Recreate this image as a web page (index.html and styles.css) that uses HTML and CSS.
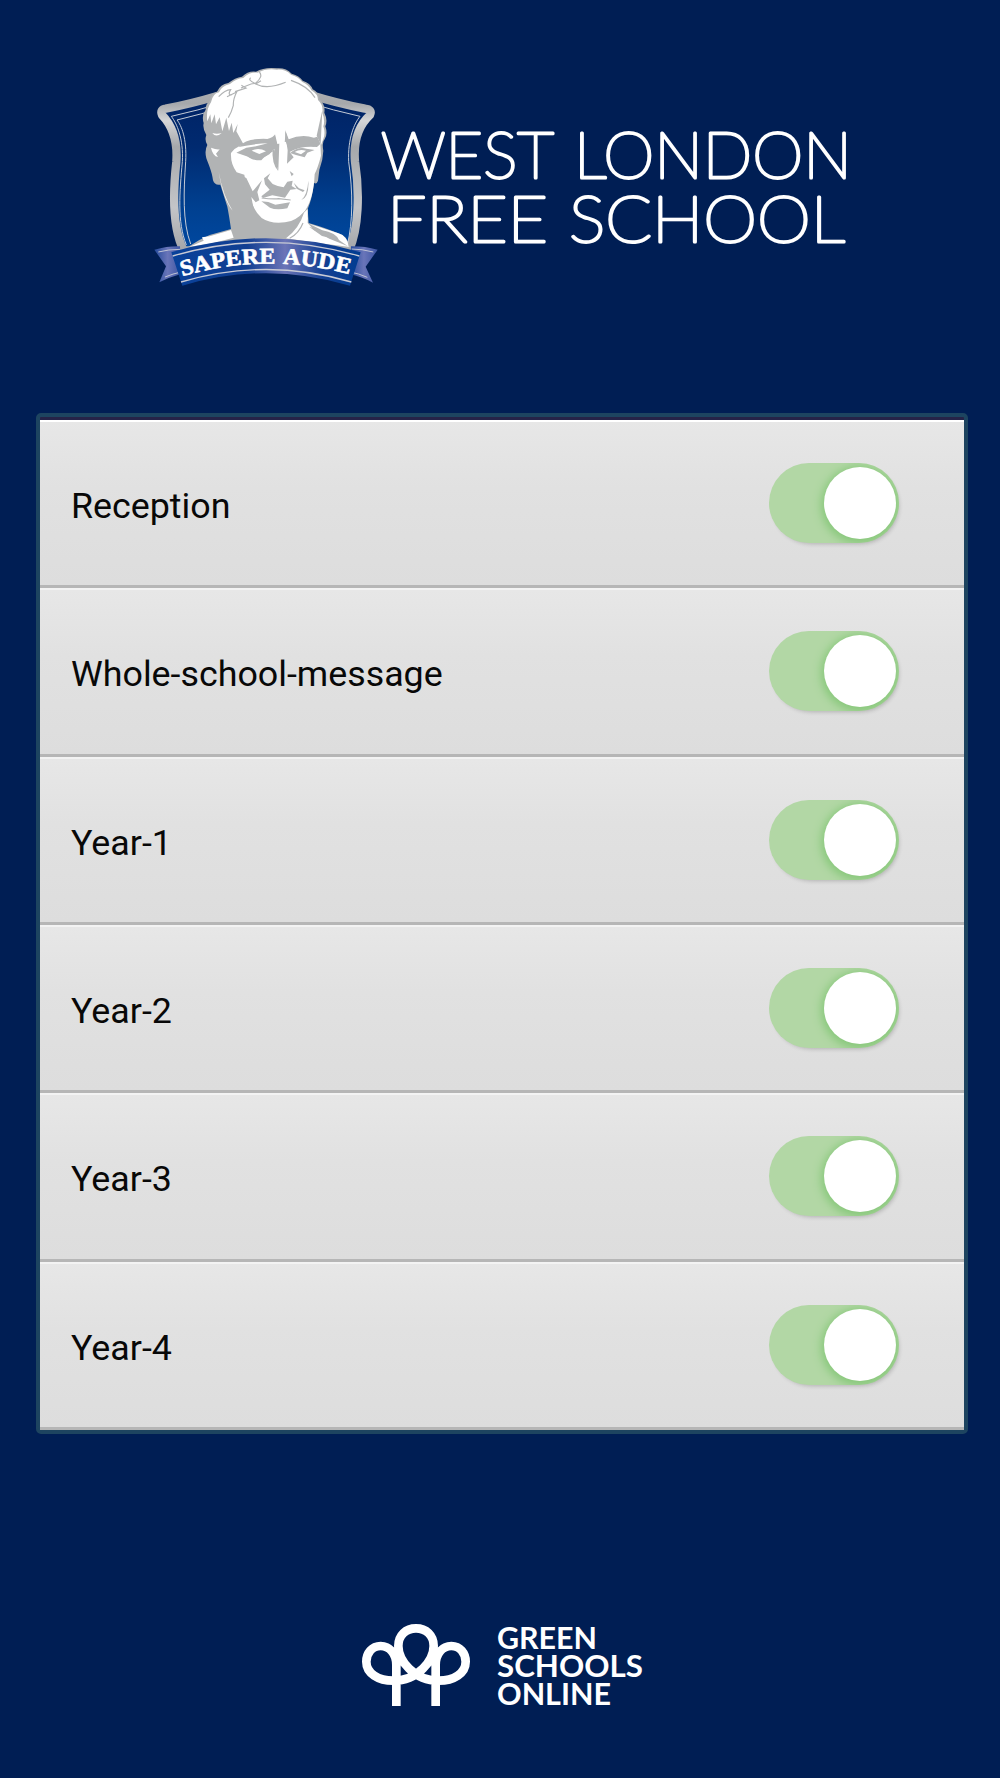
FILE: index.html
```html
<!DOCTYPE html>
<html lang="en">
  <head>
    <meta charset="UTF-8" />
    <meta name="viewport" content="width=device-width, initial-scale=1.0" />
    <title>West London Free School</title>
    <link rel="stylesheet" href="styles.css">
  </head>
  <body>
    <header class="header">
      <svg class="crest" viewBox="0 0 720 720">
        <defs>
          <linearGradient id="shield" x1="0" y1="0" x2="0" y2="1">
            <stop offset="0" stop-color="#002060" />
            <stop offset="0.4" stop-color="#002a70" />
            <stop offset="0.75" stop-color="#004090" />
            <stop offset="1" stop-color="#0048a0" />
          </linearGradient>
          <linearGradient id="silver" x1="0" y1="0" x2="0" y2="1">
            <stop offset="0" stop-color="#b1b3b6" />
            <stop offset="0.15" stop-color="#a6a8ab" />
            <stop offset="0.25" stop-color="#d5d6d8" />
            <stop offset="0.4" stop-color="#a6a8ab" />
            <stop offset="0.75" stop-color="#c4c5c8" />
            <stop offset="1" stop-color="#a4a6a9" />
          </linearGradient>
          <linearGradient id="ribbon">
            <stop offset="0" stop-color="#08419a" />
            <stop offset="0.4" stop-color="#123f92" />
            <stop offset="0.6" stop-color="#6b74b7" />
            <stop offset="0.8" stop-color="#123f92" />
            <stop offset="1" stop-color="#003c91" />
          </linearGradient>
          <linearGradient id="tail">
            <stop offset="0" stop-color="#254a9b" />
            <stop offset="0.5" stop-color="#6975b9" />
            <stop offset="1" stop-color="#3c55a3" />
          </linearGradient>
          <path id="motto" d="M112 664 Q364 590 622 660" />
        </defs>

        <!-- shield -->
        <path d="M116 586 C82 520 84 410 94 320 C99 250 75 205 51 180 Q44 163 62 161 Q245 124 361 68 Q480 124 660 161 Q683 163 675 180 C648 205 624 250 630 320 C644 410 642 520 612 586 Z" fill="url(#shield)" stroke="url(#silver)" stroke-width="25" stroke-linejoin="round" />
        <path d="M124 570 C96 500 104 410 112 320 C116 250 95 205 79 184 Q245 147 361 96 Q480 147 645 184 C628 205 608 250 611 320 C624 410 624 500 607 570" fill="none" stroke="#c3cad6" stroke-width="3" />
        <path d="M137 567 C112 500 116 410 122 320 C126 250 109 211 96 195 Q245 160 361 110" fill="none" stroke="#c3cad6" stroke-width="3" />

        <!-- bust in shade -->
        <path d="M128 577 Q160 554 194 540 L258 522 Q252 480 247 455 L226 389 Q209 392 204 376 C201 350 189 324 184 310 Q178 286 187 270 Q178 255 184 240 Q172 221 176 204 Q169 181 182 164 Q182 145 195 139 Q197 115 216 110 Q226 88 250 84 Q270 68 291 65 Q309 47 333 50 Q360 35 396 40 Q423 38 440 56 Q463 62 473 77 Q496 84 503 103 Q522 113 522 132 Q542 148 538 173 Q549 195 541 214 Q549 237 539 253 Q530 260 535 287 Q534 316 523 345 L519 377 Q515 389 507 384 Q502 430 488 462 L491 504 Q545 520 580 535 Q608 542 616 580 Z" fill="#b1b3b4" />
        <!-- hair and forehead -->
        <path d="M198 142 Q203 116 222 112 Q230 92 255 87 Q274 70 295 69 Q313 51 338 53 Q365 39 396 44 Q420 42 438 59 Q460 65 471 80 Q492 89 499 106 Q519 117 519 135 Q536 151 532 174 Q541 195 535 214 Q542 235 535 252 L528 270 L517 245 L507 248 Q470 236 431 253 L422 229 L419 263 L397 267 L390 238 L382 254 Q337 244 295 267 L274 229 L278 207 L265 234 L260 203 L252 228 L244 188 L232 229 L224 187 L213 208 L209 178 L199 205 L196 178 L187 199 Q182 165 198 142 Z" fill="#fff" />
        <!-- face -->
        <path d="M258 294 Q282 264 325 262 L385 258 Q347 274 304 278 L274 293 L305 304 Q336 322 373 298 L388 281 L386 309 L400 346 L403 263 L424 260 L428 286 L426 326 L446 307 L434 291 Q466 272 516 276 L526 267 L528 302 Q519 337 509 357 Q506 430 480 467 Q451 500 420 502 Q378 508 350 489 Q326 468 317 432 Q303 420 303 388 L298 359 L275 352 Q256 326 258 294 Z" fill="#fff" />
        <!-- shoulders and neck -->
        <path d="M134 575 L176 557 L171 547 L194 544 L258 525 L266 548 L205 564 Z M423 550 Q463 519 477 473 L488 462 L488 504 L507 525 L553 551 L615 576 L515 563 Z M492 506 L580 535 Q607 543 611 575 L582 555 Q572 533 532 526 Z" fill="#fff" />
        <path d="M198 278 Q215 285 224 283 L213 296 L219 306 Q203 303 198 278 M221 350 Q234 422 263 467 Q235 435 221 350 M202 234 Q216 239 230 234 Q213 249 202 234 M453 545 Q489 515 488 486" fill="#fff" />

        <g fill="#b1b3b4">
          <!-- brows, eyes -->
          <path d="M281 276 Q303 250 347 253 Q375 255 389 240 L395 266 Q346 262 281 276 M420 225 L430 255 Q475 248 516 266 L507 275 Q459 264 430 280 L422 259 Z" />
          <path d="M303 288 Q330 272 364 283 L386 288 Q362 300 349 316 Q317 317 304 299 Z M435 294 Q461 273 484 281 L509 285 L487 293 L479 307 Q456 302 435 294 Z" />
          <!-- nose -->
          <path d="M383 278 L390 292 Q392 321 400 349 Q379 325 383 278 M434 348 L446 357 L440 364 Z M376 355 L368 370 L383 387 Q399 395 416 397 L427 380 L443 377 L440 393 L455 402 L436 404 L420 428 L382 421 L354 429 L349 424 L374 404 L360 388 L357 370 Z" />
          <!-- cheeks -->
          <path d="M286 361 L304 369 L323 409 L351 376 L337 411 L343 436 L332 442 L319 426 Q322 450 331 471 Q292 415 286 361 M446 383 L462 400 L479 406 L474 411 L455 401 Z M490 377 Q493 427 469 435 Q487 420 490 377" />
          <!-- mouth -->
          <path d="M349 439 Q370 439 391 449 L435 442 L427 460 Q393 466 375 458 Z" />
          <path d="M492 515 L554 534 L566 551 L531 543 Z M532 165 L527 267 L515 242 Z" />
        </g>
        <path d="M320 287 Q341 276 363 289 L343 297 Z M449 291 Q464 281 483 287 L468 298 Z" fill="#fff" />
        <g fill="none" stroke="#b1b3b4" stroke-width="3.5">
          <path d="M221 125 Q240 105 257 104 Q247 121 260 120 M246 125 L275 111 Q264 133 265 151 Q259 173 250 188 M270 110 L303 99 L289 91 M288 99 L318 87 L329 85 Q308 75 317 68 M331 85 Q356 65 343 51 M348 77 L332 87 Q366 105 422 82 M438 76 Q489 93 510 128 M350 429 Q382 433 401 431 L437 435" />
          <path d="M434 550 Q462 535 474 504" />
        </g>

        <!-- ribbon -->
        <g stroke-linejoin="round">
          <path d="M28 584 Q68 573 105 574 L108 657 Q74 666 43 682 L63 634 Z" fill="url(#tail)" />
          <path d="M698 584 Q656 573 618 574 L615 657 Q653 666 684 683 L662 635 Z" fill="url(#tail)" />
          <path d="M40 591 Q70 583 105 583 M60 666 Q84 656 108 651 M685 591 Q650 582 620 582 M667 667 Q640 655 616 651" fill="none" stroke="#c0c4d5" stroke-width="3" />
          <path d="M79 592 Q363 507 647 592 L615 692 Q363 617 112 692 Z" fill="url(#ribbon)" />
          <path d="M83 603 Q363 521 643 603 M108 681 Q363 606 619 681" fill="none" stroke="#c8cad5" stroke-width="4" />
        </g>
        <text class="motto"><textPath href="#motto" textLength="508" lengthAdjust="spacingAndGlyphs">SAPERE AUDE</textPath></text>
      </svg>

      <svg class="school-name" viewBox="0 0 475 130">
        <text x="2" y="57.5" textLength="173" lengthAdjust="spacingAndGlyphs">WEST</text>
        <text x="195" y="57.5" textLength="278" lengthAdjust="spacingAndGlyphs">LONDON</text>
        <text x="8" y="121.5" textLength="161" lengthAdjust="spacingAndGlyphs">FREE</text>
        <text x="190" y="121.5" textLength="276" lengthAdjust="spacingAndGlyphs">SCHOOL</text>
      </svg>
    </header>

    <main class="groups">
      <label class="group"><span>Reception</span><i class="switch"></i></label>
      <label class="group"><span>Whole-school-message</span><i class="switch"></i></label>
      <label class="group"><span>Year-1</span><i class="switch"></i></label>
      <label class="group"><span>Year-2</span><i class="switch"></i></label>
      <label class="group"><span>Year-3</span><i class="switch"></i></label>
      <label class="group"><span>Year-4</span><i class="switch"></i></label>
    </main>

    <footer class="footer">
      <svg class="tree" viewBox="36 42 324 246">
        <path d="M139 288 V165 C139 130 118 108 92 108 C66 108 49 130 49 155 C49 190 85 212 130 212 C205 212 251 150 251 108 C251 75 228 55 198 55 C168 55 145 75 145 108 C145 150 191 212 266 212 C311 212 347 190 347 155 C347 130 330 108 304 108 C278 108 257 130 257 165 V288" fill="none" stroke="#fff" stroke-width="26" />
      </svg>
      <svg class="company" viewBox="0 0 150 86">
        <text x="0" y="24" textLength="100" lengthAdjust="spacingAndGlyphs">GREEN</text>
        <text x="0" y="52" textLength="146" lengthAdjust="spacingAndGlyphs">SCHOOLS</text>
        <text x="0" y="80" textLength="114" lengthAdjust="spacingAndGlyphs">ONLINE</text>
      </svg>
    </footer>
  </body>
</html>
```
FILE: styles.css
```css
* {
  margin: 0;
  padding: 0;
  box-sizing: border-box;
}

body {
  height: 1778px;
  background: #001e54;
  font-family: Roboto, "Liberation Sans", sans-serif;
  overflow: hidden;
}

.header {
  display: flex;
  height: 413px;
  padding: 55px 0 0 145px;
}

.crest {
  width: 240px;
  height: 240px;
  flex: none;
}

.motto {
  font-family: "Liberation Serif", serif;
  font-size: 68px;
  font-weight: bold;
  word-spacing: 8px;
  fill: #fff;
  stroke: #fff;
  stroke-width: 2px;
}

.school-name {
  width: 475px;
  height: 130px;
  margin: 65px 0 0 -6px;
  overflow: visible;
}

.school-name text {
  font-family: Lato, sans-serif;
  font-size: 64px;
  font-weight: 100;
  fill: #fff;
  stroke: #fff;
  stroke-width: 3px;
  stroke-linejoin: round;
}

.groups {
  width: 932px;
  height: 1021px;
  margin-left: 36px;
  border: 4px solid #1d4460;
  border-radius: 5px;
  display: grid;
  grid-template-rows: repeat(6, 1fr);
  padding-top: 3px;
  background: #252348;
}

.group {
  display: flex;
  align-items: center;
  justify-content: space-between;
  padding: 0 65px 1px 31px;
  background: linear-gradient(#e7e7e7, #e1e1e1 40%, #dddddd);
  border-top: 2px solid #f3f3f3;
  border-bottom: 3px solid #b6b6b6;
  color: #080808;
  font-size: 35.8px;
}

.group:first-child {
  border-top-color: #fff;
}

.group span {
  padding-top: 6px;
}

.switch {
  display: flex;
  justify-content: flex-end;
  width: 130px;
  height: 80px;
  padding: 4px 3px 4px 4px;
  border-radius: 40px;
  background: #b2d7a5;
  box-shadow: 2px 3px 4px -2px rgba(0, 0, 0, 0.2);
  overflow: hidden;
}

.switch::after {
  content: "";
  width: 72px;
  height: 72px;
  border-radius: 50%;
  background: #fff;
  box-shadow: 0 2px 8px 3px #88c87b;
}

.footer {
  display: flex;
  padding: 190px 0 0 362px;
}

.tree {
  width: 108px;
  height: 82px;
}

.company {
  width: 150px;
  height: 86px;
  margin: 1px 0 0 27px;
  overflow: visible;
}

.company text {
  font-family: Lato, sans-serif;
  font-size: 30px;
  font-weight: 700;
  fill: #fff;
}
```
